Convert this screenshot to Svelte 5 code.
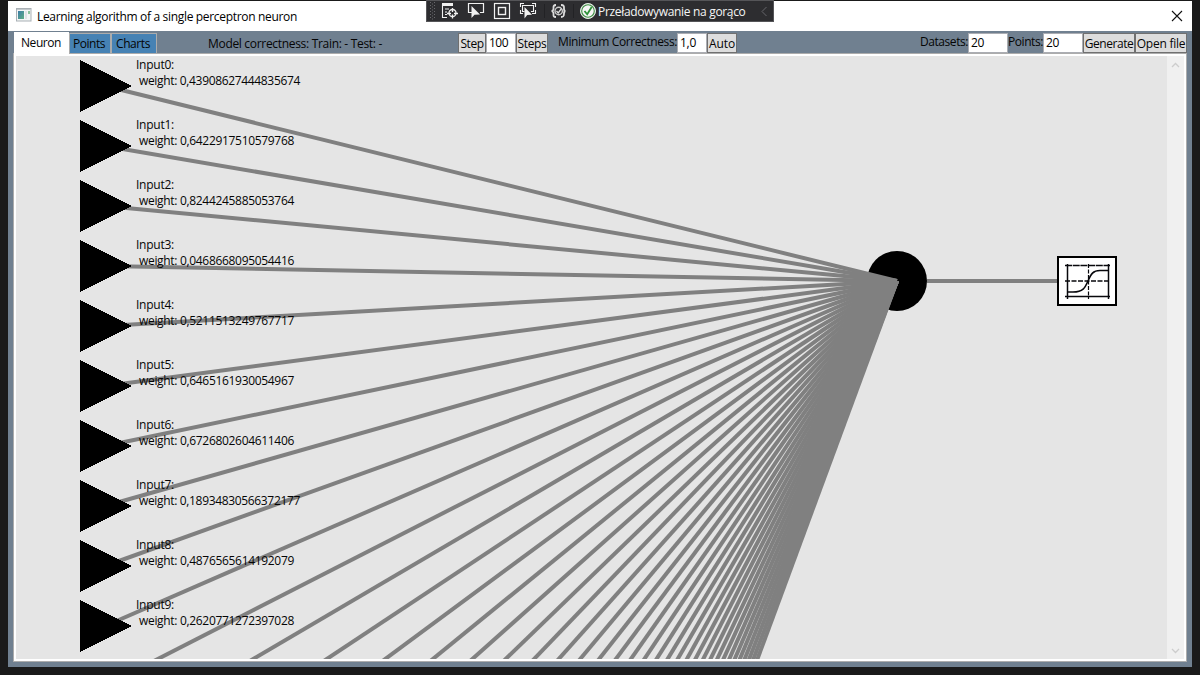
<script>
  const weights = [
    '0,43908627444835674', '0,6422917510579768', '0,8244245885053764', '0,0468668095054416',
    '0,5211513249767717', '0,6465161930054967', '0,6726802604611406', '0,18934830566372177',
    '0,4876565614192079', '0,2620771272397028'
  ];
  const lines = Array.from({ length: 40 }, (_, i) => 30 + i * 60);
  const dots = [2, 5, 8, 11, 14, 17];

  // Tightens or loosens the tracking so a label fills its measured width.
  function fit(node, width) {
    const natural = node.getBoundingClientRect().width;
    node.style.letterSpacing = `${(width - natural) / node.textContent.length}px`;
  }
</script>

<div class="desktop">
  <div class="window">
    <header class="title">
      <svg class="appicon" width="16" height="14" viewBox="0 0 16 14">
        <defs><linearGradient id="g" x1="0" y1="0" x2="1" y2="1"><stop offset="0" stop-color="#3c7ca8" /><stop offset="1" stop-color="#5fae84" /></linearGradient></defs>
        <rect x=".5" y=".5" width="14.5" height="12.5" fill="#f4f5f6" stroke="#a9b0b5" />
        <path d="M1 1.5H15" stroke="#c3c9cd" />
        <rect x="2" y="3" width="6" height="8" fill="url(#g)" />
        <rect x="9" y="3" width="2" height="8" fill="#dfe3e5" /><rect x="12" y="3" width="2" height="3" fill="#8cc39d" />
      </svg>
      <span class="t" use:fit={260}>Learning algorithm of a single perceptron neuron</span>
      <svg class="close" width="12" height="12" viewBox="0 0 12 12"><path d="M1 1L11 11M11 1L1 11" stroke="#111" stroke-width="1.1" /></svg>
    </header>

    <div class="strip">
      <div class="tab active"><span class="t" use:fit={40}>Neuron</span></div>
      <div class="tab"><span class="t" use:fit={32}>Points</span></div>
      <div class="tab charts"><span class="t" use:fit={34}>Charts</span></div>
      <div class="label model"><span class="t" use:fit={174}>Model correctness: Train: - Test: -</span></div>
      <div class="btn step"><span class="t" use:fit={23}>Step</span></div>
      <div class="box count"><span class="t" use:fit={19}>100</span></div>
      <div class="btn steps"><span class="t" use:fit={29}>Steps</span></div>
      <div class="label min"><span class="t" use:fit={119}>Minimum Correctness:</span></div>
      <div class="box one"><span class="t" use:fit={16}>1,0</span></div>
      <div class="btn auto"><span class="t" use:fit={26}>Auto</span></div>
      <div class="label sets"><span class="t" use:fit={48}>Datasets:</span></div>
      <div class="box wide"><span class="t" use:fit={13}>20</span></div>
      <div class="label pts"><span class="t" use:fit={35}>Points:</span></div>
      <div class="box wide"><span class="t" use:fit={13}>20</span></div>
      <div class="btn gen"><span class="t" use:fit={48.5}>Generate</span></div>
      <div class="btn gen"><span class="t" use:fit={48.5}>Open file</span></div>
    </div>

    <main>
      <div class="canvas">
        <svg class="graph" width="1151" height="603" viewBox="0 0 1151 603">
          <circle cx="881" cy="225" r="30" />
          <g stroke="#808080" stroke-width="4">
            <path d="M911 225H1041" />
            {#each lines as y}<line x1="89" y1={y} x2="881" y2="225" />{/each}
          </g>
          {#each weights as _, i}<path d="M64 {4 + i * 60}L116 {30 + i * 60}L64 {56 + i * 60}Z" shape-rendering="crispEdges" />{/each}
          <g transform="translate(1041 200)" fill="none" stroke="#08080c">
            <rect x="1" y="1" width="58" height="48" fill="#fff" stroke="#000" stroke-width="2" />
            <path d="M10.500 8V43M8 40.500H53M51.500 8V43" stroke-width="1.5" />
            <path d="M8 9.500H53" stroke-width="1.3" stroke-dasharray="7 .7" />
            <path d="M8 25H52" stroke-width="1.5" stroke-dasharray="5 1.500" />
            <path d="M31.500 8V43" stroke-width="1.2" stroke-dasharray="4 1.500" />
            <path d="M10 36H16C26 36 28 32 31 25C34 18 36 14.500 43 14.500H51" stroke-width="1.6" />
          </g>
        </svg>
        {#each weights as w, i}
          <div class="node" style="top: {i * 60}px">
            <div><span class="t" use:fit={38}>Input{i}:</span></div>
            <div class="weight"><span class="t" use:fit={w.length === 19 ? 161 : 155}>weight: {w}</span></div>
          </div>
        {/each}
      </div>
      <div class="scroll">
        <svg width="9" height="6" viewBox="0 0 9 6"><path d="M1 5L4.500 1.500L8 5" /></svg>
        <svg width="9" height="6" viewBox="0 0 9 6"><path d="M1 1L4.500 4.500L8 1" /></svg>
      </div>
    </main>
  </div>

  <div class="debug">
    <svg width="170" height="21" viewBox="427 1 170 21" fill="none" stroke="#f1f1f1">
      <g fill="#68686b" stroke="none">
        {#each dots as y}<rect x="430" y={y} width="1" height="1" /><rect x="434" y={y} width="1" height="1" /><rect x="432" y={y + 1.5} width="1" height="1" />{/each}
      </g>
      <path d="M442 4.500H453" stroke-width="3" />
      <path d="M442.500 4V17.500H447M445 9H449M445 12H447M445 14.500H447" stroke-width="1.1" />
      <circle cx="452.500" cy="13" r="3.500" stroke-width="1.3" /><path d="M452.500 8V12M452.500 14.500V18.500M447 13.500H451M454 13.500H458" stroke-width="1.3" />
      <path d="M472 12.500H468.500V3.500H483.500V12.500H480" stroke-width="1.2" />
      <path d="M471.500 6V18L474.500 14.700L480 14.500Z" fill="#f1f1f1" stroke="none" />
      <rect x="494.500" y="3.500" width="15" height="15" stroke-width="1.2" /><rect x="498.500" y="7.500" width="7" height="7" stroke-width="1.4" />
      <path d="M520.500 7V3.500H524M532 3.500H535.500V7M535.500 10V13.500H532M520.500 10V13.500H523M524.500 11.500H522.500V5.500H533.500V11.500H531" stroke-width="1.1" />
      <path d="M524.500 7V18.500L527.200 15L532 14.700Z" fill="#f1f1f1" stroke="none" />
      <path d="M544.500 4V18M573.500 4V18" stroke="#222225" />
      <path d="M556 5C553 5 553.500 7 553.500 9C553.500 10.500 552 11 551.500 11C552 11 553.500 12 553.500 13.500C553.500 15.500 553 17 556 17M561 5C564.500 5 564 7 564 9C564 10.500 565 11 565.500 11C565 11 564 12 564 13.500C564 15.500 564 17 561 17" stroke="#ddd" stroke-width="1.8" />
      <circle cx="558.700" cy="11" r="3.700" stroke="#ccc" stroke-width="1.400" /><path d="M556.500 11L558.200 13L561.500 8.500" stroke="#ddd" stroke-width="1.300" />
      <circle cx="588" cy="11" r="7.500" fill="#f5f5f5" stroke="#e4efe4" stroke-width="1" /><circle cx="588" cy="11" r="6.300" stroke="#388a3e" stroke-width="1.100" />
      <path d="M584.500 11L587.200 14.300L591.700 7" stroke="#2d9238" stroke-width="1.8" />
    </svg>
    <span class="t" use:fit={147.5}>Przeładowywanie na gorąco</span>
    <svg class="chev" width="7" height="11" viewBox="0 0 7 11"><path d="M5.500 1L1 5.500L5.500 10" fill="none" stroke="#66666a" /></svg>
  </div>
</div>

<style>
  :global(body) { margin: 0; background: #1a1a1a; }
  .desktop { position: relative; width: 1200px; height: 675px; box-sizing: border-box; padding: 1px 8px 8px; background: #1a1a1a; overflow: hidden; font: 12px/16px "Open Sans", "Noto Sans", sans-serif; color: #050505; }
  .t { display: block; white-space: pre; width: max-content; }
  .window { width: 1184px; height: 666px; background: #708090; display: flex; flex-direction: column; }
  .title { height: 30px; flex: none; background: #fff; display: flex; align-items: center; padding: 0 9px 0 8px; color: #000; }
  .title .t { padding-top: 1px; }
  .appicon { margin-right: 5px; margin-top: -2px; }
  .close { margin-left: auto; margin-right: 0; }
  .strip { display: flex; height: 22px; padding: 0 5px 0 6px; align-items: flex-start; }
  .strip > div { box-sizing: border-box; flex: none; white-space: nowrap; }
  .tab { height: 20px; width: 42px; margin-top: 2px; border: 1px solid #acacac; border-bottom: 0; background: #4682b4; padding: 2px 0 0 3px; }
  .tab.active { width: 55px; height: 23px; margin-top: 1px; background: #fff; border-color: #fff; padding: 2px 0 0 6px; position: relative; }
  .tab.charts { width: 46px; padding-left: 4px; }
  .label { padding-top: 3px; }
  .label.model { width: 250px; margin-left: 51px; padding-top: 5px; }
  .btn { height: 20px; margin-top: 2px; border: 1px solid #707070; background: #ddd; padding-top: 2px; display: flex; justify-content: center; }
  .box { height: 20px; margin-top: 2px; border: 1px solid #abadb3; background: #fff; padding: 1px 0 0 2px; color: #000; }
  .step { width: 28px; }
  .count { width: 30px; }
  .steps { width: 32px; }
  .min { width: 119px; margin-left: 10px; }
  .one { width: 30px; }
  .auto { width: 30px; }
  .sets { width: 48px; margin-left: 183px; }
  .wide { width: 40px; }
  .pts { width: 35px; }
  .gen { width: 52px; }
  main { box-sizing: border-box; height: 609px; width: 1174px; margin-left: 5px; border: 1px solid #acacac; background: #fff; padding: 2px; display: flex; }
  .canvas { position: relative; width: 1151px; height: 603px; background: #e5e5e5; overflow: hidden; }
  .graph { display: block; }
  .node { position: absolute; left: 120px; padding-top: 1px; }
  .weight { padding-left: 3px; }
  .scroll { width: 17px; height: 603px; background: #f0f0f0; display: flex; flex-direction: column; justify-content: space-between; align-items: center; box-sizing: border-box; padding: 6px 0 5px; }
  .scroll path { fill: none; stroke: #cdcdcd; stroke-width: 1.3; }
  .debug { position: absolute; left: 426px; top: 0; width: 348px; height: 22px; box-sizing: border-box; border: 1px solid #555558; background: #2d2d30; color: #f5f5f5; display: flex; align-items: center; }
  .debug .t { margin-left: 1px; padding-top: 1px; }
  .chev { margin-left: auto; margin-right: 5px; }
</style>
